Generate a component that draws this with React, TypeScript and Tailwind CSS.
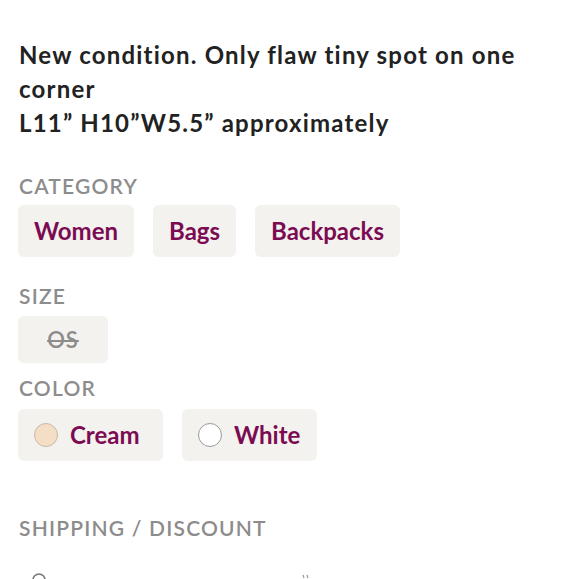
import { ReactNode } from "react";

const font = { fontFamily: "Lato, 'Noto Sans', sans-serif" };

function Label({ children, className = "" }: { children: ReactNode; className?: string }) {
  return (
    <p className={`text-[21px] leading-[24px] font-semibold tracking-[1.2px] text-[#8c8c8c] uppercase ${className}`}>
      {children}
    </p>
  );
}

function Chip({ children, className = "" }: { children: ReactNode; className?: string }) {
  return (
    <div className={`h-[52px] px-4 rounded-[6px] bg-[#f4f2ee] flex items-center gap-3 text-[24px] font-bold text-[#7b0b52] ${className}`}>
      {children}
    </div>
  );
}

export default function App() {
  return (
    <div className="w-[580px] h-[579px] overflow-hidden bg-white px-[18px] pt-[38px]" style={font}>
      <p className="w-[540px] pl-px text-[24px] leading-[34px] font-bold tracking-[1.2px] text-[#222]">
        New condition. Only flaw tiny spot on one corner
        <br />
        L11” H10”W5.5” approximately
      </p>

      <Label className="mt-[34px] pl-px">Category</Label>
      <div className="flex gap-[19px] mt-[7px]">
        <Chip>Women</Chip>
        <Chip>Bags</Chip>
        <Chip>Backpacks</Chip>
      </div>

      <Label className="mt-[27px] pl-px">Size</Label>
      <div className="flex mt-[8px]">
        <div className="h-[47px] w-[90px] rounded-[6px] bg-[#f4f2ee] flex items-center justify-center text-[22px] font-semibold tracking-[1px] text-[#8c8c8c] line-through">
          OS
        </div>
      </div>

      <Label className="mt-[13px] pl-px">Color</Label>
      <div className="flex gap-[19px] mt-[9px]">
        <Chip className="w-[145px]">
          <span className="w-[24px] h-[24px] rounded-full bg-[#f4dfc6] border border-[#c9b8a6]" />
          Cream
        </Chip>
        <Chip className="w-[135px]">
          <span className="w-[24px] h-[24px] rounded-full bg-white border border-[#9a9a9a]" />
          White
        </Chip>
      </div>

      <Label className="mt-[55px] pl-px">Shipping / Discount</Label>

      <div className="flex items-start mt-[32px]">
        <svg width="16" height="16" viewBox="0 0 16 16" className="ml-[13px]">
          <circle cx="8" cy="8" r="6" fill="none" stroke="#777" strokeWidth="1.6" />
        </svg>
        <svg width="10" height="10" viewBox="0 0 10 10" className="ml-[254px]">
          <path d="M2 3 L3 6 M6 3 L7 6" stroke="#999" strokeWidth="1.2" />
        </svg>
      </div>
    </div>
  );
}
